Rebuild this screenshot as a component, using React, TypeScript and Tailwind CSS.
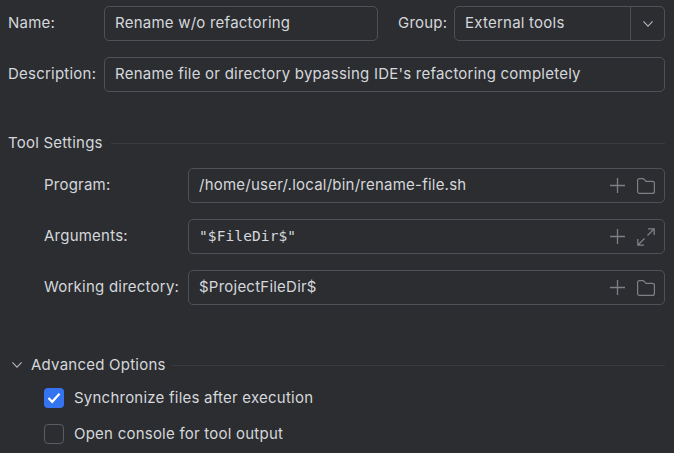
import React from 'react';

const FolderIcon = () => (
  <svg width="18" height="16" viewBox="0 0 18 16" fill="none" stroke="#7d8087" strokeWidth="1.2" className="block">
    <path d="M0.6 2.6 C0.6 1.4 1.4 0.6 2.6 0.6 H6.4 L9 3.4 H15.4 C16.6 3.4 17.4 4.2 17.4 5.4 V13.4 C17.4 14.6 16.6 15.4 15.4 15.4 H2.6 C1.4 15.4 0.6 14.6 0.6 13.4 Z" />
  </svg>
);

const ExpandIcon = () => (
  <svg width="18" height="18" viewBox="0 0 18 18" fill="none" stroke="#7d8087" strokeWidth="1.3" className="block">
    <path d="M10.5 7.5 L17 1 M11 0.8 H17.2 V7" />
    <path d="M7.5 10.5 L1 17 M0.8 11 V17.2 H7" />
  </svg>
);

const AddIcon = () => (
  <svg width="15" height="15" viewBox="0 0 15 15" fill="none" stroke="#7d8087" strokeWidth="1.3" className="block">
    <path d="M7.5 0 V15 M0 7.5 H15" />
  </svg>
);

const Chevron = () => (
  <svg width="10" height="6" viewBox="0 0 10 6" fill="none" stroke="#b4b8bf" strokeWidth="1.1" className="block">
    <path d="M0.4 0.4 L5 5.2 L9.6 0.4" />
  </svg>
);

const Field = ({ label, value, mono, icon }: { label: string; value: string; mono?: boolean; icon: React.ReactNode }) => (
  <div className="flex items-center h-[35px]">
    <div className="w-[144px] shrink-0">{label}</div>
    <div className="flex-1 h-full flex items-center justify-between border border-[#4e5157] rounded-[5px] pl-[10px] pr-[9px]">
      <span className={mono ? "font-['DejaVu_Sans_Mono',monospace] text-[14.5px] tracking-[0.1px]" : ''}>{value}</span>
      <div className="flex items-center gap-[12px]">
        <AddIcon />
        {icon}
      </div>
    </div>
  </div>
);

const Check = ({ label, checked }: { label: string; checked?: boolean }) => (
  <div className="flex items-center h-[20px] gap-[10px]">
    {checked ? (
      <div className="w-[20px] h-[20px] rounded-[4px] bg-[#3574f0] flex items-center justify-center">
        <svg width="14" height="12" viewBox="0 0 14 12" fill="none" stroke="#ffffff" strokeWidth="2.2">
          <path d="M1.5 6 L5.2 9.8 L12.5 1.8" />
        </svg>
      </div>
    ) : (
      <div className="w-[20px] h-[20px] rounded-[4px] border border-[#5a5d63]" />
    )}
    <span className="pt-px">{label}</span>
  </div>
);

export default function App() {
  return (
    <div className="w-[674px] h-[453px] overflow-hidden bg-[#2b2d30] text-[#d5d7dc] text-[15px] tracking-[0.23px] font-['Inter',sans-serif] pl-[8px] pr-[9px] pt-[6px]">
      <div className="flex items-center h-[35px]">
        <div className="w-[96px] shrink-0">Name:</div>
        <div className="w-[274px] h-full flex items-center border border-[#4e5157] rounded-[5px] pl-[10px]">
          Rename w/o refactoring
        </div>
        <div className="ml-[20px] w-[56px] shrink-0">Group:</div>
        <div className="flex-1 h-full flex items-center border border-[#4e5157] rounded-[5px]">
          <div className="flex-1 pl-[10px]">External tools</div>
          <div className="w-[34px] h-full flex items-center justify-center border-l border-[#4e5157]">
            <Chevron />
          </div>
        </div>
      </div>

      <div className="flex items-center h-[35px] mt-[16px]">
        <div className="w-[96px] shrink-0">Description:</div>
        <div className="flex-1 h-full flex items-center border border-[#4e5157] rounded-[5px] pl-[10px]">
          Rename file or directory bypassing IDE's refactoring completely
        </div>
      </div>

      <div className="flex items-center gap-[8px] h-[20px] mt-[41px]">
        <span>Tool Settings</span>
        <div className="flex-1 h-px bg-[#393b40]" />
      </div>

      <div className="pl-[36px] mt-[15px] flex flex-col gap-[16px]">
        <Field label="Program:" value="/home/user/.local/bin/rename-file.sh" icon={<FolderIcon />} />
        <Field label="Arguments:" value={'"$FileDir$"'} mono icon={<ExpandIcon />} />
        <Field label="Working directory:" value="$ProjectFileDir$" icon={<FolderIcon />} />
      </div>

      <div className="flex items-center h-[20px] mt-[50px]">
        <div className="w-[23px] pl-[4px] shrink-0">
          <Chevron />
        </div>
        <span>Advanced Options</span>
        <div className="flex-1 h-px bg-[#393b40] ml-[6px]" />
      </div>

      <div className="pl-[36px] mt-[13px] flex flex-col gap-[16px]">
        <Check label="Synchronize files after execution" checked />
        <Check label="Open console for tool output" />
      </div>
    </div>
  );
}
